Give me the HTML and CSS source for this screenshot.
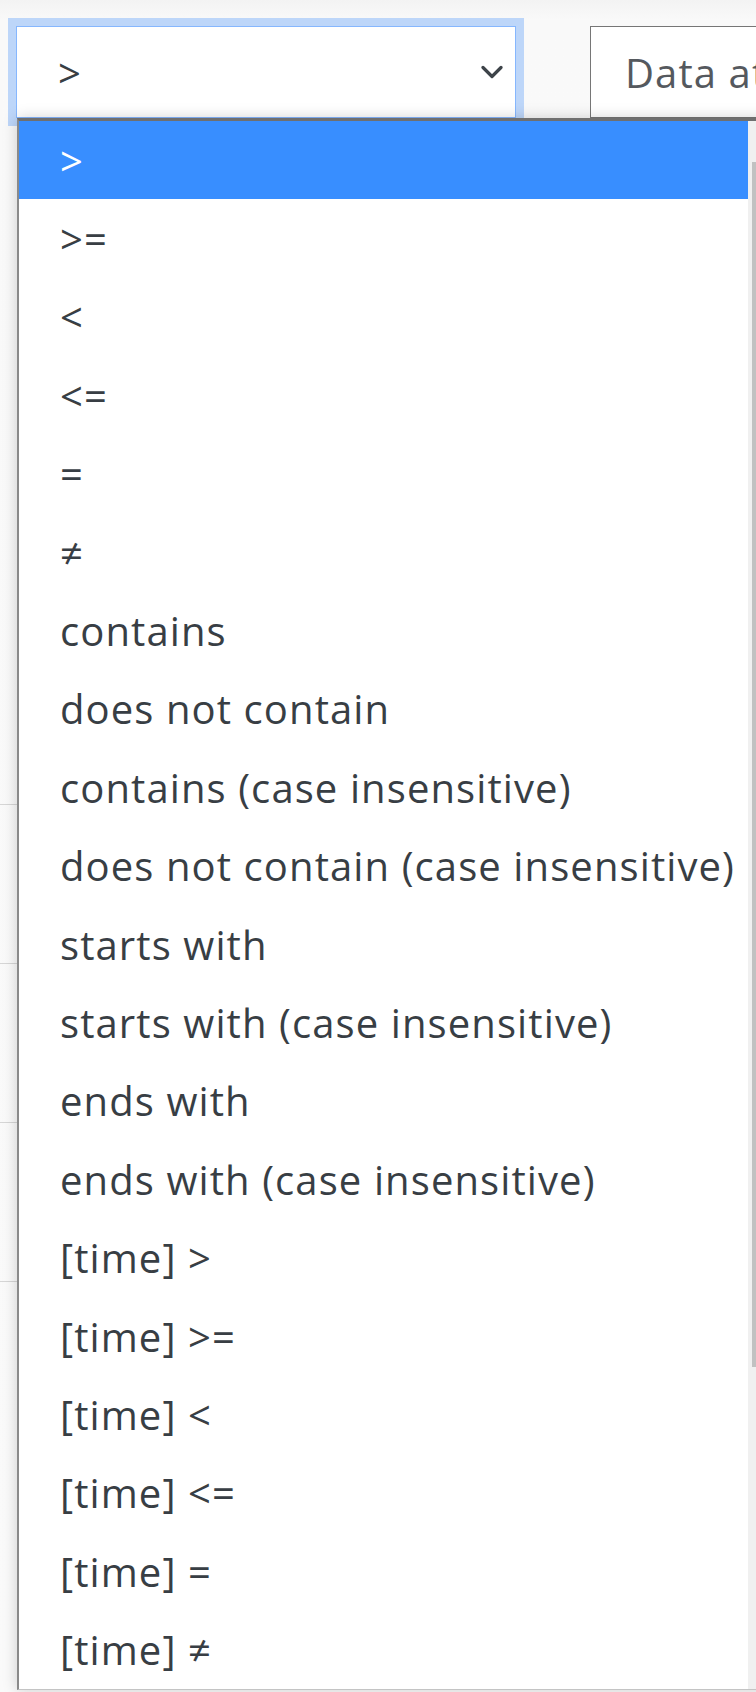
FILE: index.html
```html
<!DOCTYPE html>
<html lang="en">
<head>
<meta charset="UTF-8">
<meta name="viewport" content="width=device-width, initial-scale=1.0">
<title>Filter</title>
<link rel="stylesheet" href="styles.css">
</head>
<body>
<div class="toolbar">
  <div class="select-box">
    <span class="select-value">&gt;</span>
    <svg class="chevron" width="22" height="15" viewBox="0 0 22 15">
      <path d="M2 2.5 L11 11.5 L20 2.5" fill="none" stroke="#3d4349" stroke-width="3.2" stroke-linecap="round" stroke-linejoin="round"/>
    </svg>
  </div>
  <div class="text-box">Data attribute</div>
</div>

<div class="table">
  <div class="table-row"></div>
  <div class="table-row"></div>
  <div class="table-row"></div>
  <div class="table-row"></div>
</div>

<!-- open dropdown of the operator select -->
<div class="popup">
  <ul class="options">
    <li class="selected">&gt;</li>
    <li>&gt;=</li>
    <li>&lt;</li>
    <li>&lt;=</li>
    <li>=</li>
    <li>&ne;</li>
    <li>contains</li>
    <li>does not contain</li>
    <li>contains (case insensitive)</li>
    <li>does not contain (case insensitive)</li>
    <li>starts with</li>
    <li>starts with (case insensitive)</li>
    <li>ends with</li>
    <li>ends with (case insensitive)</li>
    <li>[time] &gt;</li>
    <li>[time] &gt;=</li>
    <li>[time] &lt;</li>
    <li>[time] &lt;=</li>
    <li>[time] =</li>
    <li>[time] &ne;</li>
  </ul>
  <div class="scrollbar">
    <div class="thumb"></div>
  </div>
</div>
</body>
</html>
```

FILE: styles.css
```css
html,
body {
  height: 1692px;
  overflow: hidden;
}

body {
  margin: 0;
  position: relative;
  font-family: "Open Sans", Arial, sans-serif;
  font-size: 40px;
  font-weight: 500;
  letter-spacing: 1.1px;
  color: #383e44;
  background: linear-gradient(#f3f3f3, #f9f9f9 20px, #fafafa);
}

.toolbar {
  display: flex;
  align-items: flex-start;
  gap: 74px;
  padding: 26px 0 0 16px;
}

.select-box {
  flex: none;
  width: 500px;
  height: 92px;
  box-sizing: border-box;
  border: 1px solid #86b7fe;
  box-shadow: 0 0 0 8px rgba(13, 110, 253, 0.25);
  background: #fff;
  display: flex;
  align-items: center;
  justify-content: space-between;
  padding: 0 12px 0 41px;
}

.chevron {
  display: block;
}

.text-box {
  flex: none;
  width: 400px;
  height: 92px;
  box-sizing: border-box;
  border: 1px solid #767676;
  background: #fff;
  color: #55595e;
  display: flex;
  align-items: center;
  padding-left: 34px;
  white-space: nowrap;
  overflow: hidden;
}

.table {
  margin-top: 528px;
}

.table-row {
  height: 158px;
  border-bottom: 1px solid #d6d6d6;
}

/* popup list */
.popup {
  position: absolute;
  top: 118px;
  left: 17px;
  width: 780px;
  display: flex;
  background: #fff;
  border-top: 3px solid #6f6f6f;
  border-left: 2px solid #8a8a8a;
  border-bottom: 1px solid #c4c4c4;
  box-shadow: 0 0 14px rgba(0, 0, 0, 0.18);
}

.options {
  list-style: none;
  margin: 0;
  padding: 0;
  width: 729px;
}

.options li {
  height: 78.4px;
  display: flex;
  align-items: center;
  padding-left: 41px;
  white-space: nowrap;
}

.options li.selected {
  background: #388eff;
  color: #fff;
}

.scrollbar {
  flex: 1;
  background: #f0f0f0;
  padding: 41px 0 0 4px;
}

.thumb {
  height: 1205px;
  background: #c1c1c1;
}
```
